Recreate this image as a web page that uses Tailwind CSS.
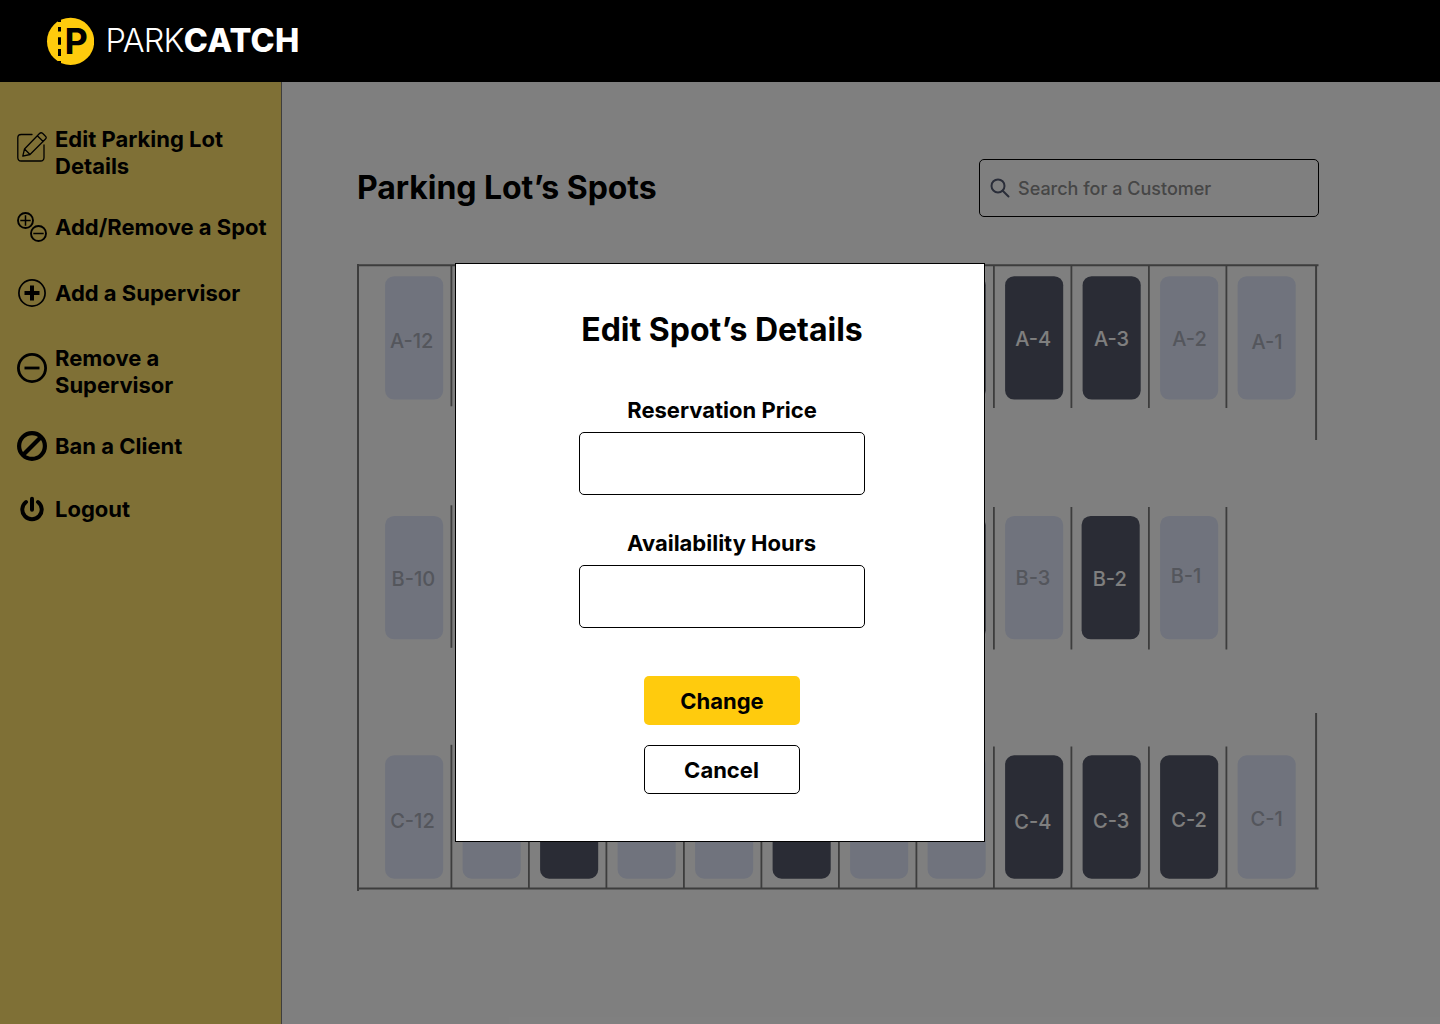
<!DOCTYPE html>
<html lang="en">
<head>
<meta charset="utf-8">
<title>ParkCatch</title>
<script src="https://cdn.jsdelivr.net/npm/@tailwindcss/browser@4"></script>
</head>
<body class="h-screen overflow-hidden bg-white font-['Inter',sans-serif] text-black">
<div class="flex h-[1024px] w-[1440px] flex-col">
  <header class="flex h-[82px] shrink-0 items-center bg-black pl-[46px]">
    <svg class="h-12 w-12" viewBox="46 17 48 48">
      <circle cx="70.6" cy="41.4" r="23.6" fill="#ffcb0d"/>
      <g fill="#000"><path d="M58 17h3v5h-3zM58 27h3v4.500h-3zM58 37.3h3v7.4h-3zM58 49h3v7h-3zM58 61h3v4h-3z"/></g>
      <text x="64.4" y="54.4" font-size="36" font-weight="700" fill="#000">P</text>
    </svg>
    <div class="ml-[11.5px] text-[32.5px] leading-[40px] font-light tracking-[-0.8px] text-white">PARK<span class="font-extrabold tracking-[0.2px]">CATCH</span></div>
  </header>
  <div class="relative flex grow">
    <aside class="w-[282px] shrink-0 border-r border-[#7c7c7c] bg-[#fee06c] pt-11 pl-[17px] text-[22px] leading-[27px] font-bold">
      <nav class="flex flex-col">
        <a class="flex h-[54px] gap-2"><svg class="mt-[5px] h-[32px] w-[30px] shrink-0" viewBox="0 0 30 32" fill="none" stroke="#000" stroke-width="1.3" stroke-linejoin="round" stroke-linecap="round"><path d="M15 3.5H4.200Q.8 3.500.8 7v19.500Q.8 30 4.200 30H23.500Q27 30 27 26.500V14"/><path d="M7.500 18 22.500 2.500Q24 1 25.500 2.300L28.500 5.200Q30 6.500 28.500 8L13 23.500 5.800 25.200ZM20.300 4.800 26.200 10.500M7.500 18 13 23.500"/></svg><span>Edit Parking Lot<br>Details</span></a>
        <a class="mt-[29px] flex h-[36px] items-center gap-2"><svg class="h-[30px] w-[30px] shrink-0" viewBox="0 0 30 30" fill="none" stroke="#000" stroke-width="1.900"><circle cx="8.500" cy="8.500" r="7.500"/><circle cx="21.500" cy="21.500" r="7.500"/><path d="M8.500 3.300v10.400M3.300 8.500h10.400M16.300 21.500h10.400" stroke-width="1.500"/></svg><span class="whitespace-nowrap">Add/Remove a Spot</span></a>
        <a class="mt-[30px] flex h-[36px] items-center gap-2"><svg class="h-[30px] w-[30px] shrink-0" viewBox="0 0 30 30" fill="none" stroke="#000"><circle cx="15" cy="15" r="13.100" stroke-width="1.700"/><path d="M15 7.500v15M7.500 15h15" stroke-width="4"/></svg><span>Add a Supervisor</span></a>
        <a class="mt-[34px] flex h-[54px] gap-2"><svg class="mt-[8px] h-[30px] w-[30px] shrink-0" viewBox="0 0 30 30" fill="none" stroke="#000" stroke-width="2.800"><circle cx="15" cy="15" r="13.600"/><path d="M7.500 15h15"/></svg><span>Remove a<br>Supervisor</span></a>
        <a class="mt-[29px] flex h-[36px] items-center gap-2"><svg class="h-[30px] w-[30px] shrink-0" viewBox="0 0 30 30" fill="none" stroke="#000" stroke-width="4.200"><circle cx="15" cy="15" r="12.900"/><path d="M6 24 24 6"/></svg><span>Ban a Client</span></a>
        <a class="mt-[27px] flex h-[36px] items-center gap-2"><svg class="h-[30px] w-[30px] shrink-0" viewBox="0 0 30 30" fill="none" stroke="#000" stroke-width="4" stroke-linecap="round"><path d="M15 4.700v11M9 8A9.700 9.700 0 1 0 21 8"/></svg><span>Logout</span></a>
      </nav>
    </aside>
    <main class="flex grow flex-col pt-[77px] pl-[75px]">
      <div class="flex h-[58px] w-[962px] items-center justify-between">
        <h1 class="text-[32px] leading-[40px] font-bold tracking-[-0.05px]">Parking Lot’s Spots</h1>
        <div class="flex h-[58px] w-[340px] items-center gap-2 rounded-[5px] border border-black pl-[10px] text-[18px] font-medium text-[#8c8c8c]">
          <svg class="h-5 w-5" viewBox="0 0 20 20" fill="none" stroke="#545b72" stroke-width="2" stroke-linecap="round"><circle cx="8" cy="7.900" r="6.500"/><path d="m12.700 12.700 5.800 5.800"/></svg>
          <span>Search for a Customer</span>
        </div>
      </div>
      <svg class="mt-[46px] h-[630px] w-[970px]" viewBox="357 263 970 630">
        <path d="M358 264v627M357 265.200H1318.500M357 888.400H1318.500M1316.100 265v175M1316.100 713v175" fill="none" stroke="#7a7a7a" stroke-width="2"/>
        <g id="dividers" stroke="#7a7a7a" stroke-width="1.800"></g>
        <g id="spots"></g>
        <g id="labels" font-size="20" font-weight="500"></g>
      </svg>
    </main>
    <div class="absolute inset-0 flex justify-center bg-black/50 pt-[181px]">
      <section class="flex h-[579px] w-[530px] flex-col items-center border border-black bg-white pt-[46px] pl-1">
        <h2 class="text-[32px] leading-[40px] font-bold">Edit Spot’s Details</h2>
        <label class="mt-[46px] text-[22px] leading-[28px] font-bold">Reservation Price</label>
        <input class="mt-2 h-[63px] w-[286px] rounded-[5px] border border-black">
        <label class="mt-[34px] pr-px text-[22px] leading-[28px] font-bold">Availability Hours</label>
        <input class="mt-2 h-[63px] w-[286px] rounded-[5px] border border-black">
        <button class="mt-12 h-[49px] w-[156px] rounded-[5px] bg-[#ffcb0d] pt-px text-[22px] font-bold">Change</button>
        <button class="mt-5 h-[49px] w-[156px] rounded-[5px] border border-black pt-px pr-px text-[22px] font-bold">Cancel</button>
      </section>
    </div>
  </div>
</div>
<script>
const NS = 'http://www.w3.org/2000/svg';
function add(group, tag, attrs, text) {
  const el = document.createElementNS(NS, tag);
  for (const k in attrs) el.setAttribute(k, attrs[k]);
  if (text) el.textContent = text;
  document.getElementById(group).appendChild(el);
}
// D = taken, L = free, one character per bay from left to right
const rows = [
  {y: 276.2, bays: 'LDLLDLLDDDLL', top: 265, bottom: 408},
  {y: 515.9, bays: 'LLDLLDLDLDL', top: 507, bottom: 649.500},
  {y: 755.3, bays: 'LLDLLDLLDDDL', top: 746.500, bottom: 888}
];
rows.forEach((row, r) => {
  [...row.bays].forEach((bay, i) => {
    const shift = r === 1 && i === 9 ? -1 : 0;
    add('spots', 'rect', {x: 385.1 + 77.5 * i + shift, y: row.y, width: 58.1, height: 123.4, rx: 9, fill: bay === 'D' ? '#54596a' : '#e0e7fa'});
  });
  for (let k = 0; k < 11; k++) {
    const lift = k === 0 ? 1.700 : 0;
    add('dividers', 'line', {x1: 451.4 + 77.5 * k, x2: 451.4 + 77.5 * k, y1: row.top - (r ? lift : 0), y2: row.bottom - (r < 2 ? lift : 0)});
  }
});
[['A-12',390,348.300,0],['A-4',1015.200,346.300,1],['A-3',1094,346.300,1],['A-2',1172.300,345.500,0],['A-1',1251.500,349,0],
 ['B-10',391.500,586,0],['B-3',1015.500,585,0],['B-2',1092.700,586,1],['B-1',1170.700,583,0],
 ['C-12',390.200,828,0],['C-4',1014.300,828.800,1],['C-3',1093,828,1],['C-2',1171.300,827,1],['C-1',1250.500,825.500,0]
].forEach(([t, x, y, taken]) => add('labels', 'text', {x, y, fill: taken ? '#ffffff' : '#a8acb8'}, t));
</script>
</body>
</html>
